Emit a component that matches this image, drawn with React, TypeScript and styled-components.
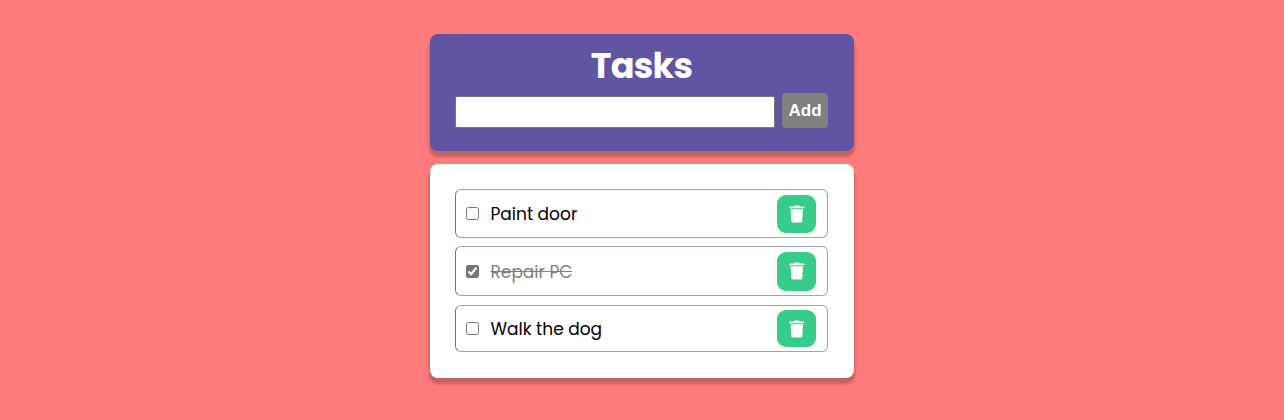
import React, { useState } from "react";
import styled, { createGlobalStyle } from "styled-components";

const GlobalStyle = createGlobalStyle`
  * { box-sizing: border-box; }
  body {
    margin: 0;
    background: #ff7b7b;
    font-family: Poppins, Inter, sans-serif;
  }
`;

const Page = styled.main`
  display: flex;
  flex-direction: column;
  align-items: center;
  gap: 13px;
  min-height: 420px;
  padding-top: 34px;
`;

const Card = styled.section`
  width: 424px;
  border-radius: 8px;
  box-shadow: 0 5px 3px 0.5px rgba(0, 0, 0, 0.22);
`;

const Header = styled(Card)`
  height: 117px;
  padding: 11px 26px 0 25px;
  background: #6155a3;
`;

const Title = styled.h1`
  margin: 0;
  height: 48px;
  line-height: 42px;
  font-size: 35px;
  font-weight: 700;
  letter-spacing: -0.75px;
  text-align: center;
  color: #fff;
`;

const Form = styled.form`
  display: flex;
  align-items: flex-end;
  justify-content: space-between;
  height: 35px;
`;

const TextInput = styled.input`
  width: 320px;
  height: 32px;
  padding: 0 6px;
  border: 1px solid #767676;
  border-radius: 2px;
  outline: none;
  background: #fff;
  font: 16px Poppins, sans-serif;
`;

const AddButton = styled.button`
  width: 46px;
  height: 35px;
  padding: 0;
  border: 0;
  border-radius: 4px;
  background: #808080;
  color: #fff;
  font: 700 17px "Liberation Sans", sans-serif;
`;

const List = styled(Card)`
  height: 214px;
  padding: 25px 26px 0 25px;
  background: #fff;
`;

const Row = styled.div<{ $height: number; $gap: number }>`
  display: flex;
  align-items: center;
  height: ${(p) => p.$height}px;
  margin-bottom: ${(p) => p.$gap}px;
  padding: 0 11px 0 10px;
  border: 1px solid #a39ccb;
  border-left-color: #7469ae;
  border-radius: 6px;
`;

const Check = styled.input`
  width: 13px;
  height: 13px;
  margin: 0 11.5px 0 0;
  accent-color: #767676;
`;

const Label = styled.span<{ $done: boolean }>`
  padding-top: ${(p) => (p.$done ? 1 : 0)}px;
  font-size: 17px;
  line-height: 24px;
  color: ${(p) => (p.$done ? "#808080" : "#000")};
  text-decoration: ${(p) => (p.$done ? "line-through" : "none")};
`;

const DeleteButton = styled.button<{ $height: number }>`
  display: flex;
  align-items: center;
  justify-content: center;
  width: 39px;
  height: ${(p) => p.$height}px;
  margin-left: auto;
  padding: 0;
  border: 0;
  border-radius: 9px;
  background: #38cc8c;
`;

const TrashIcon = () => (
  <svg width="16" height="18" viewBox="0.2 0 16 18" fill="#fff">
    <path d="M5.3 1.4Q5.5.5 6.3.5h3.4q.8 0 1 .9h4q.8 0 .8.8v1.1H.5V2.2q0-.8.8-.8z" />
    <path d="M1.8 4.2h12.4l-.8 12.2q-.1 1.1-1.2 1.1H3.8q-1.1 0-1.2-1.1z" />
  </svg>
);

const initialTasks = [
  { text: "Paint door", done: false, height: 49, gap: 8, button: 38 },
  { text: "Repair PC", done: true, height: 50, gap: 9, button: 39 },
  { text: "Walk the dog", done: false, height: 47, gap: 0, button: 37 },
];

export default function App() {
  const [tasks, setTasks] = useState(initialTasks);
  const toggle = (index: number) =>
    setTasks(tasks.map((t, i) => (i === index ? { ...t, done: !t.done } : t)));

  return (
    <>
      <GlobalStyle />
      <Page>
        <Header>
          <Title>Tasks</Title>
          <Form onSubmit={(e) => e.preventDefault()}>
            <TextInput aria-label="New task" />
            <AddButton>Add</AddButton>
          </Form>
        </Header>
        <List>
          {tasks.map((task, i) => (
            <Row key={task.text} $height={task.height} $gap={task.gap}>
              <Check type="checkbox" checked={task.done} onChange={() => toggle(i)} />
              <Label $done={task.done}>{task.text}</Label>
              <DeleteButton $height={task.button} aria-label="Delete">
                <TrashIcon />
              </DeleteButton>
            </Row>
          ))}
        </List>
      </Page>
    </>
  );
}
